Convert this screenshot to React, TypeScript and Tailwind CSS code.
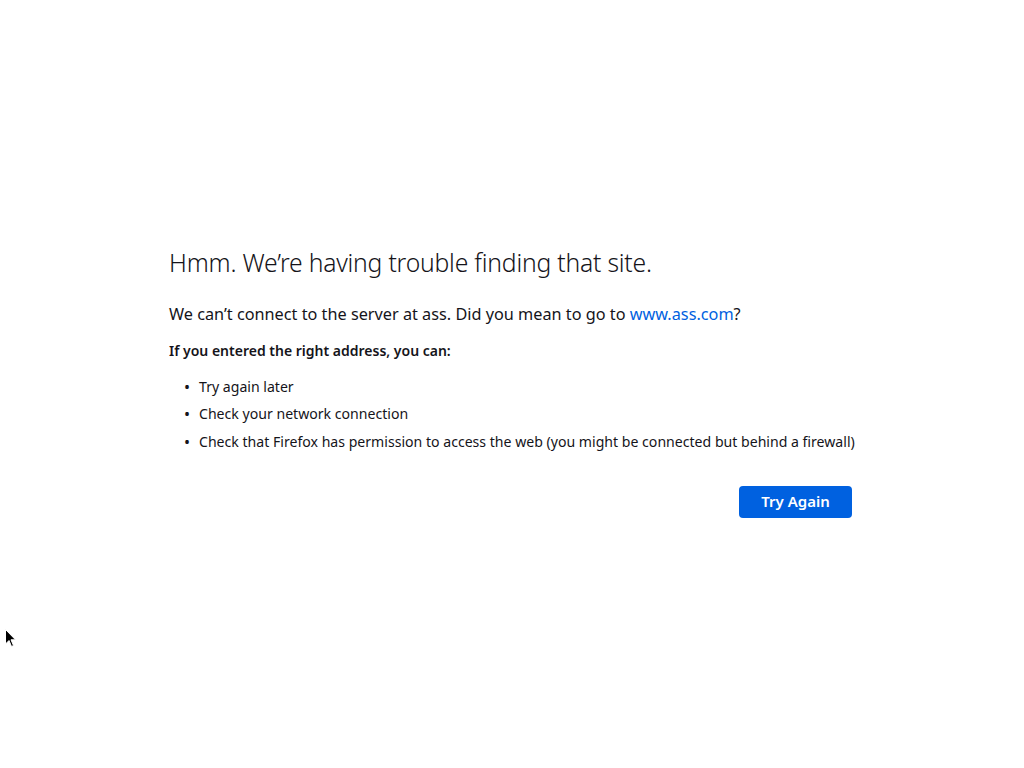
import React from "react";

export default function App() {
  return (
    <div
      className="relative w-full min-h-[768px] bg-white flex items-center justify-center text-[#15141a]"
      style={{ fontFamily: '"Noto Sans", "Open Sans", sans-serif' }}
    >
      <div className="w-[686px] flex flex-col mt-[-4px]">
        <h1 className="text-[24.7px] font-light leading-[32px] tracking-[-0.2px]">
          Hmm. We’re having trouble finding that site.
        </h1>
        <p className="mt-[23px] text-[16.25px] leading-[24px]">
          We can’t connect to the server at ass. Did you mean to go to{" "}
          <a className="text-[#0061e0]">www.ass.com</a>?
        </p>
        <p className="mt-[15px] text-[14px] font-semibold leading-[20px]">
          If you entered the right address, you can:
        </p>
        <ul className="mt-[16px] flex flex-col gap-[7.5px] text-[14.1px] leading-[20px]">
          <li className="flex items-center">
            <span className="w-[30px] pl-[15px] text-[16px] leading-[20px]">•</span>Try again later
          </li>
          <li className="flex items-center">
            <span className="w-[30px] pl-[15px] text-[16px] leading-[20px]">•</span>Check your network connection
          </li>
          <li className="flex items-center">
            <span className="w-[30px] pl-[15px] text-[16px] leading-[20px]">•</span>Check that Firefox has permission to access the web (you might be connected but behind a firewall)
          </li>
        </ul>
        <div className="mt-[34px] flex justify-end pr-[3px]">
          <button className="w-[113px] h-[32px] rounded-[4px] bg-[#0061e0] text-white text-[15px] font-semibold">
            Try Again
          </button>
        </div>
      </div>
      <svg className="absolute left-[5px] top-[629px]" width="12" height="19" viewBox="0 0 12 19">
        <path d="M0.5 0.5 L0.5 15 L4 11.5 L6.5 17.5 L8.5 16.5 L6 10.8 L10.5 10.8 Z" fill="#000" stroke="#fff" strokeWidth="1" />
      </svg>
    </div>
  );
}
